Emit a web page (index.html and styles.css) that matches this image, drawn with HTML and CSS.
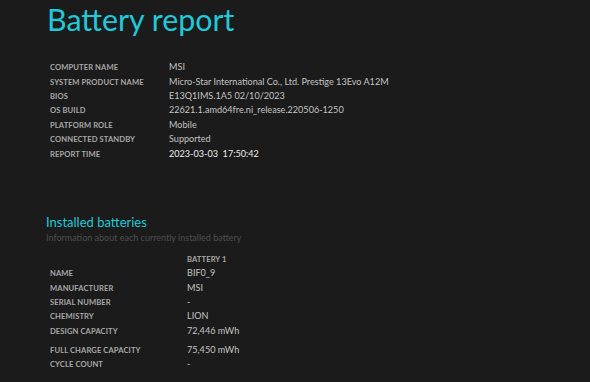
FILE: index.html
```html
<!DOCTYPE html>
<html>
<head>
<meta charset="utf-8">
<link rel="stylesheet" href="styles.css">
</head>
<body>
<div class="page">
  <h1 class="title">Battery report</h1>
  <table class="info">
    <tr><td class="label">COMPUTER NAME</td><td class="value">MSI</td></tr>
    <tr><td class="label">SYSTEM PRODUCT NAME</td><td class="value">Micro-Star International Co., Ltd. Prestige 13Evo A12M</td></tr>
    <tr><td class="label">BIOS</td><td class="value">E13Q1IMS.1A5 02/10/2023</td></tr>
    <tr><td class="label">OS BUILD</td><td class="value">22621.1.amd64fre.ni_release.220506-1250</td></tr>
    <tr><td class="label">PLATFORM ROLE</td><td class="value">Mobile</td></tr>
    <tr><td class="label">CONNECTED STANDBY</td><td class="value">Supported</td></tr>
    <tr><td class="label">REPORT TIME</td><td class="value strong">2023-03-03&nbsp;&nbsp;17:50:42</td></tr>
  </table>

  <h2 class="section">Installed batteries</h2>
  <div class="subtitle">Information about each currently installed battery</div>
  <table class="batt">
    <tr class="head"><td class="label"></td><td class="label">BATTERY 1</td></tr>
    <tr><td class="label">NAME</td><td class="value">BIF0_9</td></tr>
    <tr><td class="label">MANUFACTURER</td><td class="value">MSI</td></tr>
    <tr><td class="label">SERIAL NUMBER</td><td class="value">-</td></tr>
    <tr><td class="label">CHEMISTRY</td><td class="value">LION</td></tr>
    <tr><td class="label">DESIGN CAPACITY</td><td class="value">72,446 mWh</td></tr>
    <tr class="gap"><td class="label">FULL CHARGE CAPACITY</td><td class="value">75,450 mWh</td></tr>
    <tr><td class="label">CYCLE COUNT</td><td class="value">-</td></tr>
  </table>
</div>
</body>
</html>
```
FILE: styles.css
```css
html, body {
  margin: 0;
  padding: 0;
  background: #1b1b1b;
  height: 100%;
  overflow: hidden;
}
.page {
  padding-left: 47px;
  font-family: Lato, "Open Sans", sans-serif;
}
.title {
  margin: 0;
  font-size: 30.4px;
  font-weight: 400;
  color: #1fc9da;
  line-height: 34px;
  padding-top: 2px;
}
table {
  border-collapse: collapse;
}
td {
  padding: 0;
  height: 14.4px;
  line-height: 14px;
  vertical-align: middle;
  white-space: nowrap;
}
.info {
  margin-top: 24px;
  margin-left: 3px;
}
.info .label {
  width: 119px;
}
.label {
  font-size: 7.6px;
  font-weight: 700;
  color: #a8a8a8;
  letter-spacing: 0.1px;
}
.value {
  font-size: 9.1px;
  color: #c4c4c4;
}
.value.strong {
  color: #ededed;
}
.section {
  margin: 52px 0 0 -1px;
  font-size: 13px;
  font-weight: 400;
  color: #1fc9da;
  line-height: 18px;
}
.subtitle {
  font-size: 9px;
  color: #4e4e4e;
  line-height: 13px;
  margin-left: -1px;
}
.batt {
  margin-top: 8px;
  margin-left: 3px;
}
.batt td:first-child {
  width: 137px;
}
.batt .gap td {
  height: 13.6px;
  padding-top: 5px;
}
```
